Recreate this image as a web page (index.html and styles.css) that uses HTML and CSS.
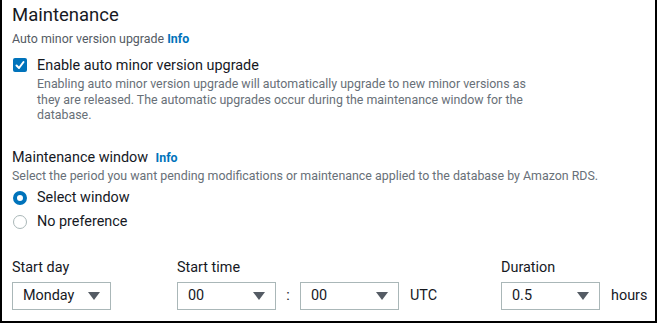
FILE: index.html
```html
<!DOCTYPE html>
<html lang="en">
<head>
    <meta charset="UTF-8">
    <title>Maintenance</title>
    <link rel="stylesheet" href="styles.css">
</head>
<body>
    <div class="panel">
        <h2 class="title">Maintenance</h2>
        <div class="sub-label">Auto minor version upgrade <span class="info">Info</span></div>

        <div class="check-row">
            <span class="checkbox">
                <svg viewBox="0 0 14 14" width="14" height="14">
                    <polyline points="3.5,7.5 6,10 10.5,4" fill="none" stroke="#fff" stroke-width="2" stroke-linecap="round" stroke-linejoin="round"/>
                </svg>
            </span>
            <div class="check-text">
                <div class="check-title">Enable auto minor version upgrade</div>
                <div class="hint">Enabling auto minor version upgrade will automatically upgrade to new minor versions as they are released. The automatic upgrades occur during the maintenance window for the database.</div>
            </div>
        </div>

        <div class="window">
            <div class="field-label">Maintenance window <span class="info">Info</span></div>
            <div class="desc">Select the period you want pending modifications or maintenance applied to the database by Amazon RDS.</div>
            <div class="radios">
                <div class="radio-row"><span class="radio checked"></span>Select window</div>
                <div class="radio-row"><span class="radio"></span>No preference</div>
            </div>
        </div>

        <div class="time-row">
            <div class="col-day">
                <div class="field-label">Start day</div>
                <div class="select"><span>Monday</span><span class="caret"></span></div>
            </div>
            <div class="col-time">
                <div class="field-label">Start time</div>
                <div class="inline">
                    <div class="select"><span>00</span><span class="caret"></span></div>
                    <span class="colon">:</span>
                    <div class="select"><span>00</span><span class="caret"></span></div>
                    <span class="unit">UTC</span>
                </div>
            </div>
            <div class="col-duration">
                <div class="field-label">Duration</div>
                <div class="inline">
                    <div class="select"><span>0.5</span><span class="caret"></span></div>
                    <span class="unit">hours</span>
                </div>
            </div>
        </div>
    </div>
</body>
</html>
```

FILE: styles.css
```css
:root {
    --text: #16191f;
    --text-muted: #687078;
    --label-muted: #545b64;
    --blue: #0073bb;
    --border: #aab7b8;
}
body {
    margin: 0;
    font-family: Roboto, "Liberation Sans", sans-serif;
    color: var(--text);
    background: #fff;
}
.panel {
    box-sizing: border-box;
    width: 657px;
    height: 323px;
    border: 2px solid #000;
    border-top: none;
    padding: 4px 0 0 10px;
}
.title {
    margin: 0;
    font-size: 18.5px;
    font-weight: 400;
    line-height: 22px;
}
.sub-label {
    margin-top: 5px;
    font-size: 12.4px;
    line-height: 16px;
    color: var(--label-muted);
}
.info {
    color: var(--blue);
    font-weight: 700;
    font-size: 12.4px;
}
.check-row {
    display: flex;
    margin-top: 10px;
}
.checkbox {
    width: 14px;
    height: 14px;
    margin: 1px 10px 0 1px;
    border-radius: 2px;
    background: var(--blue);
    flex: none;
}
.checkbox svg {
    display: block;
}
.check-title {
    font-size: 14.4px;
    line-height: 18px;
}
.hint {
    width: 495px;
    margin-top: 1px;
    font-size: 12.4px;
    line-height: 15.5px;
    color: var(--text-muted);
}
.window {
    margin-top: 26px;
}
.field-label {
    font-size: 14.4px;
    line-height: 18px;
}
.field-label .info {
    margin-left: 4px;
}
.desc {
    font-size: 12.4px;
    line-height: 17px;
    color: var(--text-muted);
}
.radios {
    margin-top: 2px;
}
.radio-row {
    display: flex;
    align-items: center;
    font-size: 14.4px;
    height: 24px;
}
.radio {
    box-sizing: border-box;
    width: 14px;
    height: 14px;
    border-radius: 50%;
    border: 1px solid var(--border);
    margin: 0 10px 0 1px;
}
.radio.checked {
    border: 4px solid var(--blue);
}
.time-row {
    display: flex;
    margin-top: 25px;
}
.col-day {
    width: 165px;
    flex: none;
}
.col-time {
    width: 324px;
    flex: none;
}
.col-duration .field-label,
.col-day .field-label,
.col-time .field-label {
    margin-bottom: 5px;
}
.inline {
    display: flex;
    align-items: center;
}
.select {
    box-sizing: border-box;
    width: 99px;
    height: 28px;
    border: 1px solid var(--border);
    display: flex;
    align-items: center;
    justify-content: space-between;
    padding: 0 10px 0 10px;
    font-size: 14.4px;
}
.caret {
    width: 0;
    height: 0;
    border-left: 6px solid transparent;
    border-right: 6px solid transparent;
    border-top: 8px solid var(--label-muted);
}
.colon {
    width: 24px;
    text-align: center;
    font-size: 14.4px;
}
.unit {
    margin-left: 11px;
    font-size: 14.4px;
}
```
